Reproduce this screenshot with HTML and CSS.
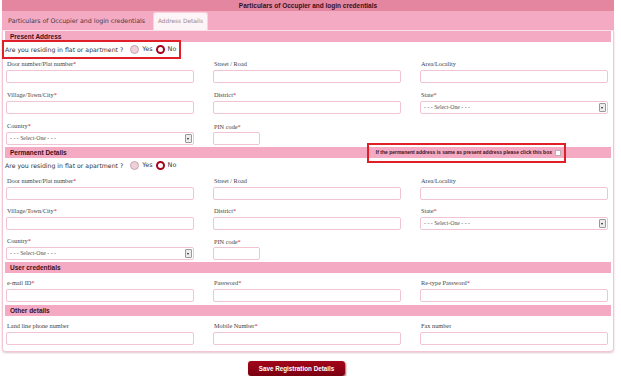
FILE: index.html
```html
<!DOCTYPE html>
<html>
<head>
<meta charset="utf-8">
<link rel="stylesheet" href="styles.css">
</head>
<body>
<div class="page">
  <div class="title">Particulars of Occupier and login credentials</div>
  <div class="tabs">
    <div class="tab">Particulars of Occupier and login credentials</div>
    <div class="tab active">Address Details</div>
  </div>
  <div class="panel">
    <div class="sec-head">Present Address</div>
    <div class="radio-row"><span class="radio-group mark"><span>Are you residing in flat or apartment ?</span><span class="radio"></span><span class="opt">Yes</span><span class="radio checked"></span><span class="opt">No</span></span></div>
    <div class="grid after-radio">
      <div class="field"><div class="lbl">Door number/Plat number<span class="req">*</span></div><div class="inp"></div></div>
      <div class="field"><div class="lbl">Street / Road</div><div class="inp"></div></div>
      <div class="field"><div class="lbl">Area/Locality</div><div class="inp"></div></div>
      <div class="field"><div class="lbl">Village/Town/City<span class="req">*</span></div><div class="inp"></div></div>
      <div class="field"><div class="lbl">District<span class="req">*</span></div><div class="inp"></div></div>
      <div class="field"><div class="lbl">State<span class="req">*</span></div><div class="inp sel">- - - Select-One - - -<span class="arrow"></span></div></div>
      <div class="field"><div class="lbl">Country<span class="req">*</span></div><div class="inp sel">- - - Select-One - - -<span class="arrow"></span></div></div>
      <div class="field pin"><div class="lbl">PIN code<span class="req">*</span></div><div class="inp short"></div></div>
    </div>
    <div class="sec-head split"><span>Permanent Details</span><span class="same mark">If the permanent address is same as present address please click this box <span class="chk"></span></span></div>
    <div class="radio-row"><span class="radio-group"><span>Are you residing in flat or apartment ?</span><span class="radio"></span><span class="opt">Yes</span><span class="radio checked"></span><span class="opt">No</span></span></div>
    <div class="grid after-radio2">
      <div class="field"><div class="lbl">Door number/Plat number<span class="req">*</span></div><div class="inp"></div></div>
      <div class="field"><div class="lbl">Street / Road</div><div class="inp"></div></div>
      <div class="field"><div class="lbl">Area/Locality</div><div class="inp"></div></div>
      <div class="field"><div class="lbl">Village/Town/City<span class="req">*</span></div><div class="inp"></div></div>
      <div class="field"><div class="lbl">District<span class="req">*</span></div><div class="inp"></div></div>
      <div class="field"><div class="lbl">State<span class="req">*</span></div><div class="inp sel">- - - Select-One - - -<span class="arrow"></span></div></div>
      <div class="field"><div class="lbl">Country<span class="req">*</span></div><div class="inp sel">- - - Select-One - - -<span class="arrow"></span></div></div>
      <div class="field pin"><div class="lbl">PIN code<span class="req">*</span></div><div class="inp short"></div></div>
    </div>
    <div class="sec-head">User credentials</div>
    <div class="grid after-head">
      <div class="field"><div class="lbl">e-mail ID<span class="req">*</span></div><div class="inp"></div></div>
      <div class="field"><div class="lbl">Password<span class="req">*</span></div><div class="inp"></div></div>
      <div class="field"><div class="lbl">Re-type Password<span class="req">*</span></div><div class="inp"></div></div>
    </div>
    <div class="sec-head">Other details</div>
    <div class="grid after-head last">
      <div class="field"><div class="lbl">Land line phone number</div><div class="inp"></div></div>
      <div class="field"><div class="lbl">Mobile Number<span class="req">*</span></div><div class="inp"></div></div>
      <div class="field"><div class="lbl">Fax number</div><div class="inp"></div></div>
    </div>
  </div>
  <div class="actions"><button class="save">Save Registration Details</button></div>
</div>
</body>
</html>
```

FILE: styles.css
```css
* { box-sizing: border-box; }
html, body { margin: 0; padding: 0; background: #ffffff; }
.page {
  width: 612px;
  margin-left: 2px;
  font-family: "Liberation Sans", Arial, sans-serif;
}
.title {
  height: 11px;
  line-height: 11px;
  background: #e4869f;
  text-align: center;
  font-weight: bold;
  font-size: 6.5px;
  color: #3a1020;
}
.tabs {
  height: 19px;
  background: #f5aac4;
  display: flex;
  align-items: flex-end;
  gap: 3px;
  padding-left: 1px;
}
.tab {
  height: 18px;
  line-height: 17px;
  padding: 0 5px;
  font-family: "DejaVu Sans", sans-serif;
  font-size: 6.3px;
  letter-spacing: -0.05px;
  color: #4a3a3f;
  border-radius: 3px 3px 0 0;
}
.tab.active {
  background: #fdf4f7;
  color: #9a8a90;
  border: 1px solid #f7d2de;
  border-bottom: none;
  padding: 0 4px;
  font-size: 5.9px;
}
.panel {
  border: 1px solid #f2c6d5;
  border-top: 1px solid #fbe2ea;
  margin-top: 0;
  padding: 0 2px 6px 2px;
  border-radius: 0 0 4px 4px;
  box-shadow: 0 1px 2px rgba(200, 140, 160, 0.5);
}
.sec-head {
  height: 11px;
  line-height: 11px;
  background: #f5aac4;
  padding-left: 5px;
  font-weight: bold;
  font-size: 6.5px;
  color: #3a1020;
}
.sec-head.split {
  display: flex;
  justify-content: space-between;
  align-items: center;
}
.same {
  font-size: 5px;
  height: 16px;
  margin-right: 47px;
  padding: 0 3px 0 7px;
  display: inline-flex;
  align-items: center;
  gap: 3px;
  outline-offset: 0;
}
.chk {
  display: inline-block;
  width: 6px;
  height: 6px;
  background: #fff;
  border: 1px solid #b9b0b4;
}
.radio-row {
  height: 14px;
  display: flex;
  align-items: center;
}
.radio-group {
  display: inline-flex;
  align-items: center;
  font-family: "DejaVu Sans", sans-serif;
  font-size: 6.2px;
  color: #333;
  white-space: nowrap;
  height: 13px;
  padding-left: 0;
  padding-right: 2px;
}
.opt { margin-left: 3px; font-size: 6.4px; }
.mark { outline: 2px solid #e02028; }
.radio-group.mark { outline-offset: 1px; }
.radio {
  display: inline-block;
  width: 9px;
  height: 9px;
  border-radius: 50%;
  background: #eed0d9;
  border: 1px solid #c9a3b0;
  margin-left: 7px;
}
.radio.checked {
  background: #fff;
  border: 2.5px solid #a8001c;
  margin-left: 3px;
}
.grid {
  display: grid;
  grid-template-columns: repeat(3, 188px);
  column-gap: 19px;
  row-gap: 6px;
  padding: 2px 0 2px 1px;
}
.grid.after-radio2 { padding-top: 3px; row-gap: 5px; }
.grid.after-head { padding-top: 4px; padding-bottom: 3px; }
.grid.last { padding-bottom: 0; }
.lbl {
  height: 12px;
  line-height: 12px;
  font-family: "Liberation Serif", "Times New Roman", serif;
  font-size: 6.3px;
  color: #444;
  padding-left: 1px;
}
.req { color: #d0203a; }
.pin .lbl { padding-top: 1px; }
.inp {
  height: 13px;
  background: #fff;
  border: 1px solid #f0c4d3;
  border-radius: 2px;
}
.inp.short { width: 47px; }
.inp.sel {
  position: relative;
  font-family: "Liberation Serif", "Times New Roman", serif;
  font-size: 5.8px;
  line-height: 11px;
  color: #555;
  padding-left: 3px;
  height: 13px;
}
.arrow {
  position: absolute;
  right: 1px;
  top: 1px;
  width: 7px;
  height: 9px;
  background: #ececec;
  border: 1px solid #9a9a9a;
  border-radius: 1px;
}
.arrow::after {
  content: "";
  position: absolute;
  left: 1px;
  top: 3px;
  border-left: 1.5px solid transparent;
  border-right: 1.5px solid transparent;
  border-top: 2px solid #222;
}
.actions {
  display: flex;
  padding: 9px 0 0 246px;
}
.save {
  display: block;
  width: 97px;
  height: 15px;
  border: none;
  border-radius: 3px;
  background: linear-gradient(#a3061a, #7a0010);
  box-shadow: 1px 1px 2px rgba(80, 0, 10, 0.6);
  color: #fff;
  font-family: "Liberation Sans", Arial, sans-serif;
  font-weight: bold;
  font-size: 6.3px;
  padding: 0;
}
```
